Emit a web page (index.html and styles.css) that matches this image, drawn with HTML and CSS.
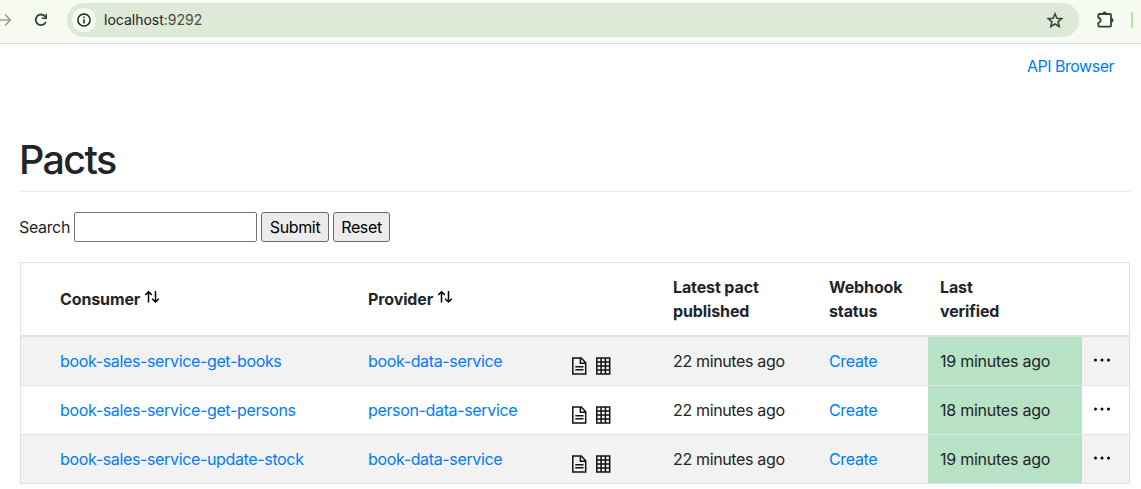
FILE: index.html
```html
<!DOCTYPE html>
<html lang="en">
<head>
<meta charset="utf-8">
<title>Pacts</title>
<link rel="stylesheet" href="styles.css">
</head>
<body>
<svg class="defs" width="0" height="0">
  <symbol id="sort" viewBox="0 0 16 14"><path d="M4.500 12.500V2M1.200 5 4.500 1.700 7.800 5M11.500 1v10.500M8.200 8.700 11.500 12 14.800 8.700" fill="none" stroke="#000" stroke-width="1.500"/></symbol>
  <symbol id="doc" viewBox="0 0 16 18"><path d="M.8 1h8.500L13.700 5.700V17H.8zM8.400 1v5.300H13.500M3.300 9.700h8.200M3.300 12.700h8.200" fill="none" stroke="#111" stroke-width="1.500"/></symbol>
  <symbol id="grid" viewBox="0 0 16 18"><path d="M.8 1h12.900v16H.8zM5.100 1v16M9.400 1v16M.8 5h12.900M.8 9h12.900M.8 13h12.900" fill="none" stroke="#111" stroke-width="1.500"/></symbol>
  <symbol id="dots" viewBox="0 0 18 4"><g fill="#000"><circle cx="2.500" cy="2" r="1.500"/><circle cx="9" cy="2" r="1.500"/><circle cx="15.500" cy="2" r="1.500"/></g></symbol>
</svg>
<header class="toolbar">
  <svg class="forward" width="13" height="16" viewBox="0 0 13 16"><path d="M0 8h10M5 2.500 10.300 8 5 13.500" fill="none" stroke="#9a9f97" stroke-width="1.700"/></svg>
  <svg class="reload" width="16" height="16" viewBox="0 0 16 16"><path d="M12.800 10.200A5.300 5.300 0 1 1 12.200 4.500L13.500 6" fill="none" stroke="#2c4432" stroke-width="1.800"/><path d="M14 1.800V7H8.800V5.500H12.500V1.800z" fill="#2c4432"/></svg>
  <div class="omnibox">
    <span class="info"><svg width="14" height="14" viewBox="0 0 14 14"><circle cx="7" cy="7" r="6.100" fill="none" stroke="#1f231e" stroke-width="1.500"/><path d="M7 6.200v4.300M7 3.400v1.500" stroke="#1f231e" stroke-width="1.500"/></svg></span>
    <span class="url">localhost<span class="port">:9292</span></span>
    <svg class="star" width="18" height="17" viewBox="0 0 18 17"><path d="M9 1.800 10.900 6.200 15.700 6.600 12.100 9.800 13.200 14.500 9 12 4.800 14.500 5.900 9.800 2.300 6.600 7.100 6.200z" fill="none" stroke="#3b463b" stroke-width="1.600"/></svg>
  </div>
  <svg class="puzzle" width="18" height="18" viewBox="0 0 18 18"><path d="M3.300 3H14a1 1 0 0 1 1 1V14.600a1 1 0 0 1-1 1H3.300a1 1 0 0 1-1-1V12C5.400 11.200 5.400 7.400 2.300 6.600V4a1 1 0 0 1 1-1z" fill="none" stroke="#2c4432" stroke-width="1.800"/><path d="M6.400 2.800a2.200 2.200 0 0 1 4.400 0zM15.300 7.100a2.200 2.200 0 0 1 0 4.400z" fill="#2c4432"/></svg>
  <span class="divider"></span>
</header>
<main class="page">
  <nav class="nav"><a href="#">API Browser</a></nav>
  <h1>Pacts</h1>
  <form class="search">
    <label for="q">Search</label>
    <input id="q" type="text">
    <button type="button" class="submit">Submit</button>
    <button type="button" class="reset">Reset</button>
  </form>
  <table class="pacts">
    <colgroup><col class="c-pad"><col class="c-consumer"><col class="c-provider"><col class="c-icons"><col class="c-published"><col class="c-webhook"><col class="c-verified"><col class="c-menu"></colgroup>
    <thead>
      <tr><th></th><th>Consumer<svg class="sort"><use href="#sort"/></svg></th><th>Provider<svg class="sort"><use href="#sort"/></svg></th><th></th><th>Latest pact<br>published</th><th>Webhook<br>status</th><th>Last<br>verified</th><th></th></tr>
    </thead>
    <tbody>
      <tr><td></td><td><a href="#">book-sales-service-get-books</a></td><td><a href="#">book-data-service</a></td><td><div class="icons"><svg><use href="#doc"/></svg><svg><use href="#grid"/></svg></div></td><td>22 minutes ago</td><td><a href="#">Create</a></td><td class="ok">19 minutes ago</td><td><svg class="dots"><use href="#dots"/></svg></td></tr>
      <tr><td></td><td><a href="#">book-sales-service-get-persons</a></td><td><a href="#">person-data-service</a></td><td><div class="icons"><svg><use href="#doc"/></svg><svg><use href="#grid"/></svg></div></td><td>22 minutes ago</td><td><a href="#">Create</a></td><td class="ok">18 minutes ago</td><td><svg class="dots"><use href="#dots"/></svg></td></tr>
      <tr><td></td><td><a href="#">book-sales-service-update-stock</a></td><td><a href="#">book-data-service</a></td><td><div class="icons"><svg><use href="#doc"/></svg><svg><use href="#grid"/></svg></div></td><td>22 minutes ago</td><td><a href="#">Create</a></td><td class="ok">19 minutes ago</td><td><svg class="dots"><use href="#dots"/></svg></td></tr>
    </tbody>
  </table>
</main>
</body>
</html>
```
FILE: styles.css
```css
* { box-sizing: border-box; }
body { margin: 0; height: 489px; overflow: hidden; background: #fff; color: #212529; font: 16px/24px Inter, "Liberation Sans", sans-serif; letter-spacing: -0.35px; }
a { color: #007bff; text-decoration: none; }
svg { display: block; flex: none; }
.defs { display: none; }
.toolbar { display: flex; align-items: center; height: 44px; padding-bottom: 3px; background: #f7faf1; border-bottom: 1px solid #dce0d6; }
.reload { margin-left: 20px; }
.omnibox { display: flex; align-items: center; width: 1012px; height: 34px; margin-left: 18px; padding: 0 15px 0 5px; border-radius: 17px; background: #dee9d7; }
.info { display: flex; align-items: center; justify-content: center; width: 24px; height: 24px; border-radius: 50%; background: #f7faf1; }
.url { flex: 1; margin-left: 8px; color: #1f231e; font-size: 14px; letter-spacing: 0; }
.port { color: #454d43; }
.puzzle { margin-left: 17px; }
.divider { width: 2px; height: 16px; margin-left: 17px; background: #a9eba5; }
.page { padding: 10px 11px 0 20px; }
.nav { display: flex; justify-content: flex-end; padding-right: 16px; letter-spacing: -0.5px; }
h1 { height: 56px; margin: 58px 0 0; border-bottom: 1px solid #e9e9e9; font-size: 39.5px; line-height: 49px; font-weight: 540; letter-spacing: -1.65px; text-indent: -1px; }
.search { display: flex; align-items: center; gap: 4px; height: 30px; margin: 20px 0 20px -1px; }
.search input { width: 183px; height: 30px; margin: 0; border: 1px solid #767676; border-radius: 2px; background: #fff; }
.search button { height: 30px; padding: 0; border: 1px solid #6b6b6b; border-radius: 3px; background: #ebebeb; color: #000; font: inherit; letter-spacing: inherit; }
.search .submit { width: 68px; }
.search .reset { width: 57px; }
.pacts { width: 1110px; table-layout: fixed; border: 1px solid #dee2e6; border-bottom: 0; border-spacing: 0; }
.c-pad { width: 27px; }
.c-consumer { width: 308px; }
.c-provider { width: 203px; }
.c-icons { width: 102px; }
.c-published { width: 156px; }
.c-webhook { width: 111px; }
.c-verified { width: 154px; }
.c-menu { width: 47px; }
th, td { padding: 0 12px; text-align: left; vertical-align: middle; white-space: nowrap; border-bottom: 1px solid #dee2e6; }
th:first-child, td:first-child { padding: 0; }
th { height: 74px; border-bottom-width: 2px; font-weight: 650; letter-spacing: -0.12px; }
td { height: 49px; }
tbody tr:nth-child(odd) { background: #f2f2f2; }
.pacts .ok { background: #b8e2c5; letter-spacing: -0.24px; }
.sort { display: inline-block; width: 16px; height: 14px; margin-left: 4px; vertical-align: 1px; }
.icons { display: flex; gap: 8px; padding: 10px 0 0 1px; }
.icons svg { width: 16px; height: 18px; }
.dots { width: 18px; height: 4px; margin: -1px 0 1px -1px; }
```
